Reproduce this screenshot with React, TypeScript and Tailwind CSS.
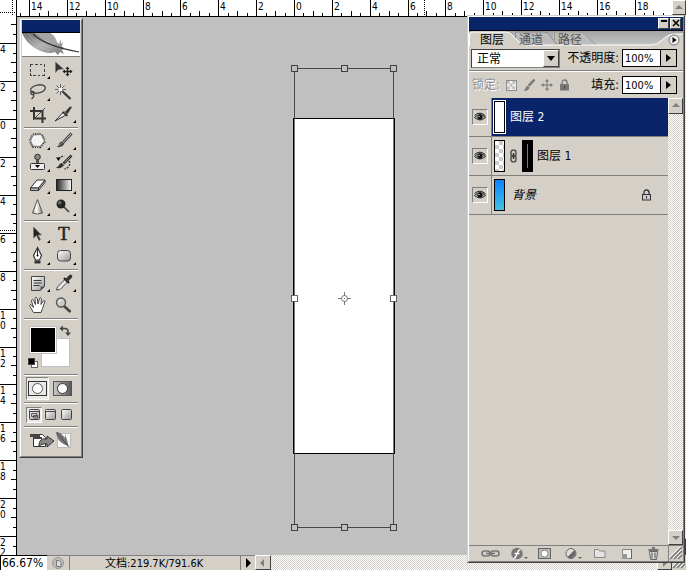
import React from 'react';
import clsx from 'clsx';

/* -------------------------------------------------- */
/*  Rulers                                             */
/* -------------------------------------------------- */

const H_STEPS = Array.from({ length: 69 }, (_, i) => i - 29);
const V_STEPS = Array.from({ length: 58 }, (_, i) => i - 10);

function TopRuler() {
  return (
    <svg className="block h-[17px] w-full bg-white" shapeRendering="crispEdges" aria-hidden="true">
      {H_STEPS.map((s) => {
        const x = Math.round(294 + s * 9.46);
        const top = s % 4 === 0 ? 0 : s % 2 === 0 ? 11 : 13;
        return (
          <g key={s}>
            <rect x={x} y={top} width="1" height={16 - top} />
            {s % 4 === 0 && (
              <text x={x + 2} y="10" className="font-['DejaVu_Sans_Condensed','DejaVu_Sans',sans-serif] text-[10px]">
                {Math.abs(s / 2)}
              </text>
            )}
          </g>
        );
      })}
      <path d="M424.5 0V16M12.5 0V16" stroke="#000" strokeDasharray="1 1" />
      <path d="M0 12.5H16" stroke="#000" strokeDasharray="1 1" />
      <rect x="16" y="0" width="1" height="17" />
      <rect x="16" y="16" width="100%" height="1" />
    </svg>
  );
}

function LeftRuler() {
  return (
    <svg className="block h-full w-[17px] shrink-0 bg-white" shapeRendering="crispEdges" aria-hidden="true">
      {V_STEPS.map((s) => {
        const y = Math.round(102 + s * 9.48);
        const left = s % 4 === 0 ? 0 : s % 2 === 0 ? 11 : 13;
        return (
          <g key={s}>
            <rect x={left} y={y} width={16 - left} height="1" />
            {s % 4 === 0 &&
              String(Math.abs(s / 2)).split('').map((digit, i) => (
                <text key={i} x="0" y={y + 10 + i * 10} className="font-['DejaVu_Sans_Condensed','DejaVu_Sans',sans-serif] text-[10px]">
                  {digit}
                </text>
              ))}
          </g>
        );
      })}
      <path d="M0 213.5H16" stroke="#000" strokeDasharray="1 1" />
      <rect x="16" y="0" width="1" height="100%" />
    </svg>
  );
}

/* -------------------------------------------------- */
/*  Canvas with the free transform box                 */
/* -------------------------------------------------- */

const HANDLES = [
  [277, 51], [327, 51], [376, 51],
  [277, 281], [376, 281],
  [277, 510], [327, 510], [376, 510],
];

function Canvas() {
  return (
    <main className="relative min-w-0 flex-1 overflow-hidden bg-[#c0c0c0]">
      <svg className="absolute top-0 left-0 h-[540px] w-[450px]" shapeRendering="crispEdges" aria-label="Document">
        <rect x="276" y="101" width="102" height="336" fill="#000" />
        <rect x="278" y="102" width="98" height="334" fill="#fff" />
        <rect x="277.5" y="51.5" width="99" height="459" fill="none" stroke="#484848" />
        <path d="M277.5 102V436M376.5 102V436" stroke="#777" />
        {HANDLES.map(([x, y]) => (
          <rect
            key={`${x}-${y}`}
            x={x - 2.5}
            y={y - 2.5}
            width="6"
            height="6"
            fill={y === 281 ? '#fff' : '#c0c0c0'}
            stroke={y === 281 ? '#666' : '#404040'}
          />
        ))}
        <g stroke="#777" fill="none">
          <path d="M321 281.5H325M330 281.5H334M327.5 275V279M327.5 284V288" />
          <circle cx="327.5" cy="281.5" r="3" shapeRendering="auto" />
          <path d="M327 281.5H328" />
        </g>
      </svg>
    </main>
  );
}

/* -------------------------------------------------- */
/*  Tool icons                                         */
/* -------------------------------------------------- */

interface Tool {
  name: string;
  flyout?: boolean;
  icon: React.ReactNode;
}

const MARQUEE_GROUP: Tool[] = [
  {
    name: 'Marquee',
    flyout: true,
    icon: (
      <path
        d="M5.500 8V5.500H8M10 5.500h2.500M14.500 5.500H17M18.500 5.500h1V8M19.500 10v2.500M19.500 14.500v2H17M15 16.500h-2.500M10.500 16.500H8M6.500 16.500h-1V14M5.500 12.500V10"
        fill="none"
        stroke="#444"
        shapeRendering="crispEdges"
      />
    ),
  },
  {
    name: 'Move',
    icon: (
      <>
        <path d="M4.500 3v10.500l3-3 5-.500z" fill="#333" stroke="#777" strokeWidth=".6" />
        <path d="M16.500 8.500v8M12.500 12.500h8" stroke="#222" strokeWidth="1.400" />
        <path d="M16.500 7.500l2 2.500h-4zM16.500 17.500l2-2.500h-4zM11.500 12.500l2.500-2v4zM21.500 12.500l-2.500-2v4z" fill="#222" />
      </>
    ),
  },
  {
    name: 'Lasso',
    flyout: true,
    icon: (
      <g fill="none" stroke="#444" strokeWidth="1.300">
        <ellipse cx="13" cy="8" rx="7.500" ry="4" transform="rotate(-12 13 8)" />
        <circle cx="7.500" cy="12" r="1.700" />
        <path d="M8 13.500c2 2 0 3-1.500 4.500" />
      </g>
    ),
  },
  {
    name: 'Magic Wand',
    icon: (
      <>
        <path d="M11 10l8.500 8" stroke="#333" strokeWidth="2.200" />
        <path d="M9.500 3v11M4 8.500h11M5.500 4.500l8 8M13.500 4.500l-8 8" stroke="#555" strokeWidth=".9" />
        <circle cx="9.500" cy="8.500" r="1.800" fill="#fff" />
      </>
    ),
  },
  {
    name: 'Crop',
    icon: (
      <>
        <path d="M5 8h12.500v12M9 4v11.500h12" fill="none" stroke="#333" strokeWidth="2" />
        <path d="M8 17L20 5" stroke="#444" />
      </>
    ),
  },
  {
    name: 'Slice',
    flyout: true,
    icon: (
      <>
        <path d="M4 18L13 8.500l3 3z" fill="#eee" stroke="#333" />
        <path d="M14 9l5-5.500 2 .500-4.500 7z" fill="#333" />
        <path d="M11.500 9l5 4" stroke="#222" strokeWidth="1.600" />
      </>
    ),
  },
];

const PAINT_GROUP: Tool[] = [
  {
    name: 'Healing Brush',
    flyout: true,
    icon: (
      <>
        <path d="M8 5l8-.500 3.500 6.500-4.500 5.500-7-.500-2.500-5z" fill="none" stroke="#333" strokeWidth="3.500" strokeDasharray="1 1.200" />
        <path d="M8 5l8-.500 3.500 6.500-4.500 5.500-7-.500-2.500-5z" fill="#f4f4f4" stroke="#777" />
      </>
    ),
  },
  {
    name: 'Brush',
    flyout: true,
    icon: (
      <>
        <path d="M20.500 3.500l-8 8.500" stroke="#444" strokeWidth="3" />
        <path d="M20 4l-7 7.500" stroke="#ccc" />
        <path d="M5 17c4-.500 2-5 6-5.500l2.500 2C12 17 8.500 17.500 5 17z" fill="#444" />
        <path d="M8 15.500l3-2.500" stroke="#999" />
      </>
    ),
  },
  {
    name: 'Clone Stamp',
    flyout: true,
    icon: (
      <>
        <circle cx="12.500" cy="5" r="2.800" fill="#888" stroke="#333" />
        <path d="M12.500 7.500v4" stroke="#555" strokeWidth="3" />
        <rect x="5.500" y="11.500" width="14" height="6" rx="1" fill="#eee" stroke="#333" />
        <path d="M10 13h5l-2.500 3z" />
      </>
    ),
  },
  {
    name: 'History Brush',
    flyout: true,
    icon: (
      <>
        <path d="M20.500 3.500l-8 8" stroke="#333" strokeWidth="2.600" />
        <path d="M19.500 4.500l-6 6" stroke="#aaa" strokeWidth=".8" />
        <path d="M4.500 15.500c4 0 3-4.500 6.500-4.500l2 2c-1.500 3-5 4-8.500 2.500z" fill="#333" />
        <path d="M8 7c1-2.500 3-3 5.500-2.500M18 9c2 3 0 7-4.500 8" stroke="#333" fill="none" strokeWidth="1.400" strokeDasharray="2 1.200" />
        <path d="M5 5.500h4.500L7.500 9z" />
      </>
    ),
  },
  {
    name: 'Eraser',
    flyout: true,
    icon: (
      <>
        <path d="M5.500 14L12 6h8l-6.500 8z" fill="#fff" stroke="#333" />
        <path d="M5.500 14h8v2.500h-8zM13.500 14L20 6v2.500l-6.500 8z" fill="#bbb" stroke="#333" />
      </>
    ),
  },
  { name: 'Gradient', flyout: true, icon: <rect x="5.500" y="5.500" width="15" height="11" fill="url(#toolGradient)" stroke="#222" /> },
  {
    name: 'Sharpen',
    flyout: true,
    icon: <path d="M12.500 3.500l5 13.500q-5 2-10 0z" fill="url(#cone)" stroke="#555" />,
  },
  {
    name: 'Burn',
    flyout: true,
    icon: (
      <>
        <path d="M12 10l6 6" stroke="#444" strokeWidth="1.700" />
        <circle cx="10" cy="8" r="4.500" fill="url(#ball)" />
      </>
    ),
  },
];

const VECTOR_GROUP: Tool[] = [
  {
    name: 'Path Selection',
    flyout: true,
    icon: <path d="M8.500 4v11l3-2.500 2.500 5 1.500-1-2.500-4.500h3.500z" fill="#222" stroke="#777" strokeWidth=".7" />,
  },
  {
    name: 'Type',
    flyout: true,
    icon: <text x="7" y="17" fill="#222" stroke="#222" strokeWidth=".5" className="font-['Liberation_Serif',serif] text-[19px]">T</text>,
  },
  {
    name: 'Pen',
    flyout: true,
    icon: (
      <>
        <path d="M12.500 2.500l4 8-2 4.500h-4l-2-4.500z" fill="#fff" stroke="#333" strokeWidth="1.200" />
        <path d="M12.500 3v7" stroke="#333" />
        <circle cx="12.500" cy="10.500" r="1" />
        <path d="M9.500 15.500h6v3h-6z" fill="#333" />
      </>
    ),
  },
  {
    name: 'Rounded Rectangle',
    flyout: true,
    icon: <rect x="6.500" y="5.500" width="13" height="10.500" rx="3" fill="url(#shade)" stroke="#444" />,
  },
];

const VIEW_GROUP: Tool[] = [
  {
    name: 'Notes',
    flyout: true,
    icon: (
      <>
        <path d="M6.500 4.500h13v10l-4 4h-9z" fill="url(#shade)" stroke="#444" />
        <path d="M8.500 8.500h8M8.500 11h8M8.500 13.500h6" stroke="#333" />
        <path d="M19.500 14.500h-4v4z" fill="#555" />
      </>
    ),
  },
  {
    name: 'Eyedropper',
    flyout: true,
    icon: (
      <>
        <path d="M5.500 18l1-3 8-8 2.500 2.500-8 8z" fill="#eee" stroke="#444" />
        <path d="M13 6l5 5" stroke="#222" strokeWidth="2.200" />
        <path d="M16 8l3.500-3.500" stroke="#333" strokeWidth="3.600" strokeLinecap="round" />
      </>
    ),
  },
  {
    name: 'Hand',
    icon: (
      <path
        d="M8.500 18.500L5 12.500c-.800-1.500.500-2.500 1.500-1.500L8.500 13.500 6.500 7c0-1.500 1.500-2 2-.500L10.500 10.500 10 4.500c0-1.500 2-1.500 2.200 0l.800 5.500L14.500 4.500c.500-1.500 2-1 1.800.5L16 10.500l2.200-3.500c1-1.200 2.200-.500 1.600 1L17.500 14.500l-1.500 4z"
        fill="#fff"
        stroke="#444"
      />
    ),
  },
  {
    name: 'Zoom',
    icon: (
      <>
        <path d="M13 12l6.500 6" stroke="#444" strokeWidth="2.600" />
        <circle cx="10" cy="8.500" r="4.500" fill="#ccc" stroke="#555" strokeWidth="1.400" />
        <path d="M7.500 8.500a3 3 0 013-2.500" stroke="#fff" fill="none" />
      </>
    ),
  },
];

function ToolGroup({ tools }: { tools: Tool[] }) {
  return (
    <div className="grid grid-cols-2 px-[3px]">
      {tools.map((tool) => (
        <button key={tool.name} type="button" aria-label={tool.name} className="flex h-[22px] justify-center">
          <svg width="26" height="22" viewBox="0 0 26 22">
            {tool.icon}
            {tool.flyout && <path d="M25 17v3h-3z" />}
          </svg>
        </button>
      ))}
    </div>
  );
}

function Divider() {
  return <div className="mx-0.5 mt-0.5 mb-px h-0.5 border-t border-[#808080] bg-white" />;
}

function ToolDefs() {
  return (
    <svg className="absolute h-0 w-0" aria-hidden="true">
      <defs>
        <linearGradient id="toolGradient"><stop stopColor="#222" /><stop offset="1" stopColor="#fff" /></linearGradient>
        <linearGradient id="cone"><stop stopColor="#aaa" /><stop offset=".4" stopColor="#fff" /><stop offset="1" stopColor="#777" /></linearGradient>
        <linearGradient id="shade" x2="1" y2="1"><stop stopColor="#fff" /><stop offset="1" stopColor="#999" /></linearGradient>
        <linearGradient id="mask"><stop stopColor="#ccc" /><stop offset="1" stopColor="#555" /></linearGradient>
        <radialGradient id="ball" cx=".35" cy=".35"><stop stopColor="#888" /><stop offset=".6" stopColor="#222" /></radialGradient>
        <linearGradient id="feather" x2="1" y2="1"><stop stopColor="#666" /><stop offset=".5" stopColor="#b4b4b4" /><stop offset="1" stopColor="#777" /></linearGradient>
        <linearGradient id="strip" x2="0" y2="1"><stop stopColor="#a4a4a4" /><stop offset="1" stopColor="#c6c6c6" /></linearGradient>
      </defs>
    </svg>
  );
}

function Swatches() {
  return (
    <div className="relative h-[51px]">
      <button type="button" aria-label="Background color" className="absolute top-[17px] left-[19px] size-[29px] border border-[#c0c0c0] bg-white" />
      <button type="button" aria-label="Foreground color" className="absolute top-[5px] left-[7px] size-[28px] border border-[#c0c0c0] bg-black outline-1 -outline-offset-2 outline-white" />
      <button type="button" aria-label="Swap colors" className="absolute top-1 left-[37px]">
        <svg width="13" height="12" viewBox="0 0 13 12">
          <path d="M3 3.500h3q3 0 3 3V8" fill="none" stroke="#444" strokeWidth="1.500" />
          <path d="M4 .500v6L.500 3.500zM6 7.500h6L9 11z" fill="#444" />
        </svg>
      </button>
      <button type="button" aria-label="Default colors" className="absolute top-[37px] left-[6px]">
        <svg width="10" height="10" viewBox="0 0 10 10" shapeRendering="crispEdges">
          <rect x="3.500" y="3.500" width="6" height="6" fill="#fff" stroke="#666" />
          <rect width="7" height="7" fill="#444" />
          <rect x="1" y="1" width="5" height="5" />
        </svg>
      </button>
    </div>
  );
}

const PRESSED = 'border border-t-[#808080] border-l-[#808080] border-r-white border-b-white bg-[#ebe9e4]';

function Toolbox() {
  return (
    <aside
      aria-label="Tools"
      className="absolute top-[18px] left-[19px] w-[64px] border border-t-[#d4d0c8] border-l-[#d4d0c8] border-r-[#404040] border-b-[#404040] bg-[#d4d0c8]"
    >
      <div className="border border-t-white border-l-white border-r-[#808080] border-b-[#808080] px-px pb-0.5">
        <div className="h-[13px] border-b border-black bg-[#0a246a]" />
        <svg className="block h-[24px] w-full border-b border-[#808080] bg-white" viewBox="0 0 58 23" preserveAspectRatio="none">
          <path d="M0 0h28c4 2 6 5 7 9l2 2 2-5v5l2-2-1 5 3 1-3 2 2 4-4-2-2 3-3-3-4 1C17 20 5 12 0 0z" fill="url(#feather)" />
          <path d="M12 0c7 5 16 8 22 12 0-5-2-9-6-12z" fill="#a4a4a4" />
          <path d="M2 1c6 9 15 14 27 17M6 1c6 8 14 12 24 14" stroke="#bbb" strokeWidth=".6" fill="none" />
          <path d="M11 1c9 9 24 14 46 18" stroke="#333" strokeWidth="1.200" fill="none" />
        </svg>
        <div className="pt-0.5">
          <ToolGroup tools={MARQUEE_GROUP} />
          <Divider />
          <ToolGroup tools={PAINT_GROUP} />
          <Divider />
          <ToolGroup tools={VECTOR_GROUP} />
          <Divider />
          <ToolGroup tools={VIEW_GROUP} />
          <Divider />
          <Swatches />
          <Divider />
          <div className="flex h-[23px] items-center gap-0.5 px-1">
            <button type="button" aria-label="Standard mode" className={clsx('flex size-[23px] items-center justify-center', PRESSED)}>
              <svg width="19" height="15" viewBox="0 0 19 15">
                <rect x=".5" y=".5" width="18" height="14" fill="#e8e8e8" stroke="#333" />
                <circle cx="9.500" cy="7.500" r="5" fill="#fff" stroke="#555" />
              </svg>
            </button>
            <button type="button" aria-label="Quick mask mode" className="flex size-[23px] items-center justify-center">
              <svg width="19" height="15" viewBox="0 0 19 15">
                <rect x=".5" y=".5" width="18" height="14" fill="url(#mask)" stroke="#555" />
                <circle cx="9.500" cy="7.500" r="5" fill="#fff" stroke="#333" />
              </svg>
            </button>
          </div>
          <Divider />
          <div className="flex h-[19px] items-center px-1">
            {['Standard screen', 'Full screen with menu', 'Full screen'].map((mode, i) => (
              <button key={mode} type="button" aria-label={mode} className={clsx('flex size-[16px] items-center justify-center', i === 0 && PRESSED)}>
                <svg width="11" height="11" viewBox="0 0 11 11">
                  <rect x=".5" y=".5" width="10" height="10" rx="1" fill="url(#shade)" stroke="#444" />
                  {i < 2 && <path d="M1 2.500h9" stroke="#444" />}
                  {i === 0 && <path d="M2.500 4.500h5v3h-5zM4.500 6.500h4v2.500h-4z" fill="#ccc" stroke="#444" strokeWidth=".8" />}
                </svg>
              </button>
            ))}
          </div>
          <Divider />
          <button type="button" aria-label="Jump to ImageReady" className="flex h-[25px] w-full items-start justify-center pt-0.5">
            <svg width="44" height="18" viewBox="0 0 44 18">
              <path d="M4.500 3.500h9l3 3v9h-12z" fill="#fff" stroke="#333" />
              <path d="M1 3h10v3H1zM4 6h9v2H4z" fill="#444" />
              <rect x="28.500" y="2.500" width="13" height="14" fill="#f8f8f8" stroke="#bbb" />
              <path d="M27 1c4 0 6 2 9 6V3l2 6c1 3 1 5 3 8l-4-3c-6-2-9-6-10-13z" fill="#777" />
              <path d="M28 2l11 13" stroke="#444" />
              <path d="M10 15c0-6 3-8 8-7V5l7 5-7 6v-3c-3-.500-5 0-8 2z" fill="#888" stroke="#333" />
            </svg>
          </button>
        </div>
      </div>
    </aside>
  );
}

/* -------------------------------------------------- */
/*  Layers palette                                     */
/* -------------------------------------------------- */

const RAISED = 'border border-t-white border-l-white border-r-[#404040] border-b-[#404040] bg-[#d4d0c8]';
const DITHER = 'bg-[repeating-conic-gradient(#ffffff_0_25%,#d4d0c8_0_50%)] bg-[length:2px_2px]';

const TABS = ['图层', '通道', '路径'];

interface Layer {
  name: string;
  thumb: string;
  selected?: boolean;
  mask?: boolean;
  locked?: boolean;
}

const LAYERS: Layer[] = [
  { name: '图层 2', thumb: 'bg-white', selected: true },
  { name: '图层 1', thumb: 'bg-[repeating-conic-gradient(#cccccc_0_25%,#ffffff_0_50%)] bg-[length:8px_8px]', mask: true },
  { name: '背景', thumb: 'bg-linear-to-b from-[#0a84ff] to-[#45bfe0]', locked: true },
];

function EyeIcon() {
  return (
    <svg width="12" height="10" viewBox="0 0 12 10">
      <path d="M.500 5.500Q6-.500 11.500 5.500 6 10.500.500 5.500z" fill="#aaa" stroke="#333" />
      <circle cx="6" cy="5" r="2.600" fill="#111" />
      <path d="M.500 3.500Q6-1.500 11.500 4" fill="none" stroke="#222" />
      <circle cx="5" cy="4.500" r=".7" fill="#ddd" />
    </svg>
  );
}

function LockIcon({ dim }: { dim?: boolean }) {
  return (
    <svg width="11" height="12" viewBox="0 0 11 12">
      <path d="M3 5.500V3.500q0-2.500 2.500-2.500T8 3.500v2" fill="none" stroke={dim ? '#777' : '#333'} strokeWidth="1.300" />
      <rect x="1.500" y="5.500" width="8" height="5.500" fill={dim ? '#777' : '#ccc'} stroke={dim ? '#777' : '#333'} />
      <path d="M5.500 7v2.500" stroke="#333" />
    </svg>
  );
}

function LayerRow({ layer }: { layer: Layer }) {
  return (
    <li className="flex h-[39px] border-b border-[#808080]">
      <div className="flex w-[23px] shrink-0 items-center justify-center border-r border-[#808080]">
        <button
          type="button"
          aria-label={`Visibility ${layer.name}`}
          className="flex size-[16px] items-center justify-center border border-t-[#808080] border-l-[#808080] border-r-white border-b-white"
        >
          <EyeIcon />
        </button>
      </div>
      <div className={clsx('flex flex-1 items-center pr-4 pl-px', layer.selected && 'bg-[#0a246a] text-white')}>
        <span className={clsx('border', layer.selected ? 'border-white' : 'border-transparent')}>
          <span className={clsx('block h-[32px] w-[11px] border border-black', layer.thumb)} />
        </span>
        {layer.mask && (
          <>
            <svg className="mx-1" width="8" height="14" viewBox="0 0 8 14">
              <g fill="none" stroke="#555" strokeWidth="1.500">
                <rect x="1" y="1" width="5" height="6.500" rx="2.500" />
                <rect x="1" y="6.500" width="5" height="6.500" rx="2.500" />
              </g>
              <path d="M3.500 4v6" stroke="#333" strokeWidth="1.500" />
            </svg>
            <span className="flex h-[32px] w-[11px] justify-center bg-black py-1">
              <span className="w-px bg-[#777]" />
            </span>
          </>
        )}
        <span className={clsx('text-[12px] leading-4', layer.locked ? 'pl-1.5 italic' : 'pl-1')}>{layer.name}</span>
        {layer.locked && <span className="ml-auto"><LockIcon /></span>}
      </div>
    </li>
  );
}

function PercentField({ id, label }: { id: string; label: string }) {
  return (
    <div className="flex items-center">
      <label htmlFor={id} className="pr-[3px] text-[12px] whitespace-nowrap">{label}</label>
      <input id={id} defaultValue="100%" className="h-[18px] w-[39px] border border-black bg-white pl-[2px] text-[11px] outline-none" />
      <button type="button" aria-label={`${label} slider`} className="-ml-px flex h-[18px] w-[17px] items-center justify-center border border-black bg-[#d4d0c8]">
        <svg width="5" height="8" viewBox="0 0 5 8"><path d="M0 0l5 4-5 4z" /></svg>
      </button>
    </div>
  );
}

function ScrollArrow({ dir, className }: { dir: 'up' | 'down' | 'left' | 'right'; className?: string }) {
  const d = { up: 'M4 1l4 4H0z', down: 'M0 2h8L4 6z', left: 'M5 0v8L1 4z', right: 'M2 0v8l4-4z' }[dir];
  return (
    <button type="button" aria-label={`Scroll ${dir}`} className={clsx('flex shrink-0 items-center justify-center', RAISED, className)}>
      <svg width="8" height="8" viewBox="0 0 8 8"><path d={d} fill="#808080" /></svg>
    </button>
  );
}

const FOOTER_ICONS: Tool[] = [
  {
    name: 'Link layers',
    icon: (
      <g fill="none" stroke="#777" strokeWidth="1.600">
        <rect x="1" y="5" width="8" height="5" rx="2.500" />
        <rect x="10" y="5" width="8" height="5" rx="2.500" />
        <path d="M5 7.500h9" />
      </g>
    ),
  },
  {
    name: 'Layer style',
    flyout: true,
    icon: (
      <>
        <circle cx="9" cy="7.500" r="5.800" fill="#777" />
        <path d="M6 12c3.500 0 2.500-9 6.500-8M6.500 7.500h5" stroke="#fff" strokeWidth="1.300" fill="none" />
      </>
    ),
  },
  {
    name: 'Add mask',
    icon: (
      <>
        <rect x="3.500" y="2.500" width="12" height="10" fill="#bbb" stroke="#666" />
        <circle cx="9.500" cy="7.500" r="3.500" fill="#fff" stroke="#888" />
      </>
    ),
  },
  {
    name: 'Adjustment layer',
    flyout: true,
    icon: (
      <>
        <circle cx="9" cy="7.500" r="5" fill="#ddd" stroke="#666" />
        <path d="M5.500 11a5 5 0 007-7z" fill="#666" />
      </>
    ),
  },
  { name: 'New group', icon: <path d="M4.500 3.500h4l1 1.500h5.500v6.500H4.500z" fill="#e4e4e4" stroke="#888" /> },
  {
    name: 'New layer',
    icon: (
      <>
        <path d="M5.500 3.500h9v9h-5l-4-4z" fill="#eee" stroke="#888" />
        <path d="M5 8h5v5H5z" fill="#999" />
        <path d="M14.500 3v10" stroke="#666" />
      </>
    ),
  },
  {
    name: 'Delete layer',
    icon: (
      <>
        <path d="M5.500 5.500h8l-1 8h-6z" fill="#ddd" stroke="#666" />
        <path d="M4.500 4h10M8 2h3" stroke="#555" strokeWidth="1.400" />
        <path d="M8 6.500v6M11 6.500v6" stroke="#666" strokeWidth="1.200" />
      </>
    ),
  },
];

function Grip() {
  return (
    <svg width="14" height="14" viewBox="0 0 14 14" aria-hidden="true">
      <path d="M1 13L13 1M5 13l8-8M9 13l4-4" stroke="#777" strokeWidth="1.500" />
      <path d="M0 12L12 0M4 12l8-8M8 12l4-4" stroke="#fff" />
    </svg>
  );
}

function LayersPalette() {
  return (
    <aside
      aria-label="Layers"
      className="absolute top-[15px] right-px bottom-[7px] flex w-[218px] flex-col border border-t-[#d4d0c8] border-l-[#d4d0c8] border-r-[#404040] border-b-[#404040] bg-[#d4d0c8]"
    >
      <div className="flex min-h-0 flex-1 flex-col border border-t-white border-l-white border-r-[#808080] border-b-[#808080]">
        <div className="flex h-[14px] justify-end gap-px border-b border-black bg-[#0a246a] pt-px pr-0.5">
          <button type="button" aria-label="Minimize" className={clsx('flex h-[11px] w-[11px] justify-center', RAISED)}>
            <svg width="8" height="8" viewBox="0 0 8 8"><path d="M1 2h6" stroke="#000" strokeWidth="2" /></svg>
          </button>
          <button type="button" aria-label="Close" className={clsx('flex h-[11px] w-[11px] justify-center', RAISED)}>
            <svg width="8" height="8" viewBox="0 0 8 8"><path d="M1 1l6 6M7 1L1 7" stroke="#000" strokeWidth="1.600" /></svg>
          </button>
        </div>

        <div role="tablist" className="relative flex h-[15px]">
          <svg className="absolute top-0 left-0" width="214" height="15" viewBox="0 0 214 15" aria-hidden="true">
            <rect width="214" height="15" fill="url(#strip)" />
            <path d="M84 1h26q5 0 9 5l9 9H84z" fill="#bcbcbc" />
            <path d="M85.500 15V1H110q5 0 9 5l9 9" fill="none" stroke="#999" />
            <path d="M45 1h30q5 0 8 5l7 9H45z" fill="#bcbcbc" />
            <path d="M46.500 8V1H75q4 0 7 5l7 9" fill="none" stroke="#888" />
            <path d="M0 15V4q0-3 3-3h34q5 0 8 5l5 5q3 3 7 3h125q6 0 10-4l5-4q4-3 8-3h9v12z" fill="#d4d0c8" />
            <path d="M.500 15V4q0-3 3-3H37q5 0 8 5l5 5q3 3 7 3h125q6 0 10-4l5-4q4-3 8-3h9" fill="none" stroke="#fff" />
            <circle cx="205" cy="9" r="5" fill="#eee" stroke="#777" />
            <path d="M203.500 6l4 3-4 3z" />
          </svg>
          {TABS.map((tab, i) => (
            <button
              key={tab}
              type="button"
              role="tab"
              aria-selected={i === 0}
              className={clsx('relative w-[39px] pl-[11px] text-left text-[12px] leading-[18px]', i === 0 ? 'text-black' : 'text-[#555]')}
            >
              {tab}
            </button>
          ))}
        </div>

        <div className="flex h-[25px] items-center justify-between border-b border-[#808080] pr-[6px] pl-0.5">
          <div className="relative flex">
            <select
              aria-label="Blend mode"
              className="h-[19px] w-[89px] appearance-none border border-t-[#404040] border-l-[#404040] border-r-[#808080] border-b-[#808080] bg-white pl-[5px] text-[12px] outline-none"
            >
              <option>正常</option>
            </select>
            <span className={clsx('pointer-events-none absolute top-px right-px flex h-[17px] w-[16px] items-center justify-center', RAISED)}>
              <svg width="8" height="5" viewBox="0 0 8 5"><path d="M0 0h8L4 5z" /></svg>
            </span>
          </div>
          <PercentField id="opacity" label="不透明度:" />
        </div>

        <div className="flex h-[27px] items-center justify-between border-t border-white pr-[6px] pl-[3px]">
          <div className="flex items-center gap-1.5 text-[12px] text-[#909090]">
            <span className="[text-shadow:1px_1px_0_#fff]">锁定:</span>
            <svg width="11" height="11" viewBox="0 0 12 12" aria-hidden="true">
              <rect x=".5" y=".5" width="11" height="11" fill="#eee" stroke="#888" />
              <path d="M1 1h3v3H1zM7 1h3v3H7zM4 4h3v3H4zM1 7h3v3H1zM7 7h3v3H7z" fill="#bbb" />
            </svg>
            <svg width="12" height="12" viewBox="0 0 12 12" aria-hidden="true">
              <path d="M11.500.500L5.500 7" stroke="#777" strokeWidth="2.400" />
              <path d="M0 11.500c3 0 2-4 4.500-4.500l2 1.500c-.500 3-3.500 3.500-6.500 3z" fill="#777" />
            </svg>
            <svg width="12" height="12" viewBox="0 0 12 12" aria-hidden="true">
              <path d="M6 1v10M1 6h10" stroke="#777" />
              <path d="M6 0l2 2.500H4zM6 12l2-2.500H4zM0 6l2.500-2v4zM12 6L9.500 4v4z" fill="#777" />
            </svg>
            <LockIcon dim />
          </div>
          <PercentField id="fill" label="填充:" />
        </div>

        <div className="flex min-h-0 flex-1 border-b border-[#808080]">
          <ul className="flex-1">
            {LAYERS.map((layer) => <LayerRow key={layer.name} layer={layer} />)}
          </ul>
          <div className={clsx('flex w-[15px] flex-col justify-between', DITHER)}>
            <ScrollArrow dir="up" className="h-[16px]" />
            <ScrollArrow dir="down" className="h-[15px]" />
          </div>
        </div>

        <div className="flex h-[15px] justify-between pl-[12px]">
          <div className="flex flex-1 justify-between">
            {FOOTER_ICONS.map((item) => (
              <button key={item.name} type="button" aria-label={item.name}>
                <svg width="20" height="15" viewBox="0 0 20 15">
                  {item.icon}
                  {item.flyout && <path d="M16 11h4l-2 2z" fill="#666" />}
                </svg>
              </button>
            ))}
          </div>
          <div className="ml-1 border-l border-[#808080]"><Grip /></div>
        </div>
      </div>
    </aside>
  );
}

/* -------------------------------------------------- */
/*  Status bar                                         */
/* -------------------------------------------------- */

function StatusBar() {
  return (
    <footer className="flex h-[15px] shrink-0 bg-[#d4d0c8]">
      <input
        aria-label="Zoom level"
        defaultValue="66.67%"
        className="w-[47px] border-t border-l border-black bg-white pl-px text-[12px] leading-3 outline-none"
      />
      <div className="flex w-[23px] items-center justify-center border-t border-r border-[#808080]">
        <svg width="12" height="12" viewBox="0 0 12 12" aria-hidden="true">
          <circle cx="6" cy="6" r="5.500" fill="#bbb" stroke="#999" />
          <path d="M4.500 3.500h2.500l2 2v4H4.500z" fill="#ddd" stroke="#777" />
        </svg>
      </div>
      <div className="w-[171px] border-t border-r border-[#808080] pl-[35px] text-[11px] leading-[15px] whitespace-nowrap">文档:219.7K/791.6K</div>
      <button type="button" aria-label="Status options" className="flex w-[14px] items-center justify-center border-t border-[#808080]">
        <svg width="5" height="10" viewBox="0 0 5 10"><path d="M0 0l5 5-5 5z" /></svg>
      </button>
      <ScrollArrow dir="left" className="w-[16px]" />
      <div className={clsx('flex-1', DITHER)} />
      <ScrollArrow dir="right" className="w-[15px]" />
      <Grip />
    </footer>
  );
}

/* -------------------------------------------------- */
/*  App                                                */
/* -------------------------------------------------- */

export default function App() {
  return (
    <div className="relative flex h-screen flex-col overflow-hidden bg-[#c0c0c0] font-['DejaVu_Sans_Condensed','Noto_Sans_CJK_SC',sans-serif] text-black">
      <ToolDefs />
      <header className="flex h-[17px] shrink-0">
        <div className="min-w-0 flex-1 overflow-hidden"><TopRuler /></div>
        <ScrollArrow dir="up" className="h-[15px] w-[14px]" />
      </header>
      <div className="flex min-h-0 flex-1">
        <LeftRuler />
        <Canvas />
        <div className={clsx('flex w-[14px] flex-col justify-end', DITHER)}>
          <ScrollArrow dir="down" className="h-[17px]" />
        </div>
      </div>
      <StatusBar />
      <Toolbox />
      <LayersPalette />
    </div>
  );
}
